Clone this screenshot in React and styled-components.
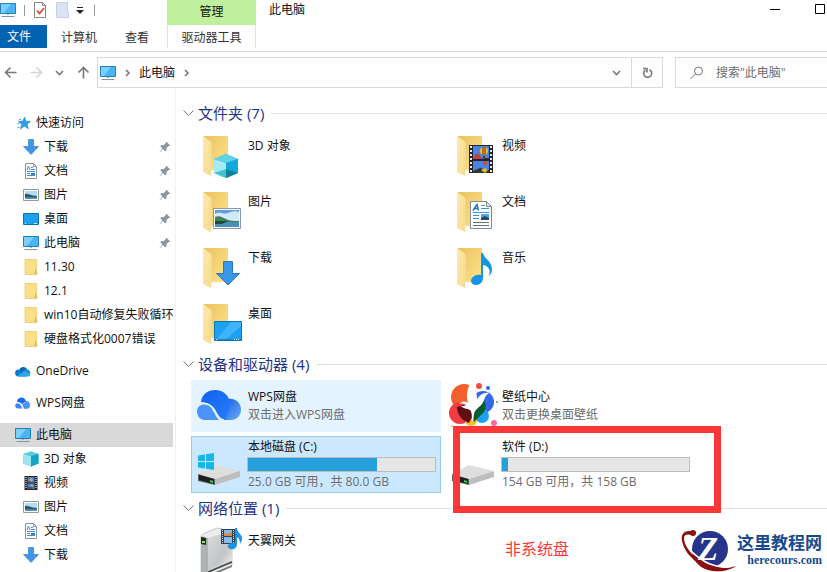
import React from 'react'
import styled, { createGlobalStyle, css } from 'styled-components'

const GlobalStyle = createGlobalStyle`
  * {
    box-sizing: border-box;
  }

  body {
    margin: 0;
    background: #fff;
    color: #111;
    font: 12px/18px 'Open Sans', 'Noto Sans CJK SC', sans-serif;
  }

  button,
  input {
    font: inherit;
    color: inherit;
    border: 0;
    padding: 0;
    background: none;
  }

  svg {
    display: block;
    flex: none;
    overflow: visible;
  }
`

const Window = styled.div`
  position: relative;
  display: flex;
  flex-direction: column;
  height: 100vh;
  overflow: hidden;
`

/* ---------- header ---------- */

const TitleBar = styled.header`
  display: flex;
  flex: none;
  height: 25px;
`

const QuickAccess = styled.div`
  display: flex;
  align-items: center;
  width: 167px;
  padding-bottom: 5px;
  gap: 8px;
`

const QuickButton = styled.button`
  display: flex;
`

const Separator = styled.span`
  width: 1px;
  height: 11px;
  background: #999;
`

const ContextTitle = styled.div`
  width: 89px;
  padding-top: 3px;
  background: #c1f09c;
  text-align: center;
`

const Title = styled.h1`
  flex: 1;
  margin: 0;
  padding-left: 13px;
  font-size: 12px;
  font-weight: 400;
  line-height: 20px;
`

const WindowButtons = styled.div`
  display: flex;
  gap: 34px;
  padding: 4px 1px 0 0;
`

const WindowButton = styled.button`
  display: flex;
  height: 11px;
`

const Tabs = styled.nav`
  display: flex;
  flex: none;
  height: 27px;
  border-bottom: 1px solid #d9d9d9;
`

const MainTabs = styled.div`
  display: flex;
  width: 167px;
`

const Tab = styled.button`
  height: 23px;
  padding: 2px 14px 0;
  color: #333;

  ${(props) => props.$file && css`
    width: 47px;
    padding: 0 16px 0 7px;
    background: #0063b1;
    color: #fff;
  `}

  ${(props) => props.$context && css`
    width: 89px;
    padding: 2px 0 0;
    border: solid #dfe6da;
    border-width: 0 1px;
  `}
`

const AddressBar = styled.div`
  display: flex;
  flex: none;
  align-items: center;
  height: 31px;
  margin-top: 5px;
`

const NavButtons = styled.div`
  display: flex;
  justify-content: space-between;
  width: 97px;
  padding: 0 7px 0 4px;
`

const NavButton = styled.button`
  display: flex;
  align-items: center;
`

const Address = styled.div`
  display: flex;
  flex: 1;
  align-items: center;
  height: 31px;
  padding-left: 2px;
  gap: 9px;
  border: 1px solid #d9d9d9;
`

const AddressEnd = styled.div`
  display: flex;
  margin-left: auto;
`

const AddressButton = styled.button`
  display: flex;
  align-items: center;
  justify-content: center;
  width: ${(props) => props.$width}px;
  height: 29px;
  border-left: ${(props) => (props.$divided ? '1px solid #d9d9d9' : '0')};
`

const Search = styled.label`
  display: flex;
  align-items: center;
  width: 152px;
  height: 31px;
  margin-left: 12px;
  padding-left: 14px;
  gap: 12px;
  border: 1px solid #d9d9d9;
  border-right: 0;
`

const SearchInput = styled.input`
  width: 100px;
  outline: 0;

  &::placeholder {
    color: #6d6d6d;
    opacity: 1;
  }
`

/* ---------- body ---------- */

const Body = styled.div`
  display: flex;
  flex: 1;
  min-height: 0;
`

const Sidebar = styled.nav`
  display: flex;
  flex: none;
  flex-direction: column;
  gap: 8px;
  width: 176px;
  padding: 23px 2px 0 0;
  border-right: 1px solid #f0f0f0;
  overflow: hidden;
`

const SideLink = styled.a`
  display: flex;
  align-items: center;
  gap: 5px;
  height: 24px;
  padding-left: ${(props) => (props.$nested ? 23 : 15)}px;
  background: ${(props) => (props.$selected ? '#d9d9d9' : 'none')};
  color: inherit;
  text-decoration: none;
  white-space: nowrap;
`

const PinSlot = styled.span`
  margin-left: auto;
  padding-right: 2px;
`

const Content = styled.main`
  flex: 1;
  min-width: 0;
  padding: 12px 0 0 7px;
  overflow: hidden;
`

const GroupTitle = styled.h2`
  display: flex;
  align-items: center;
  height: 26px;
  margin: 0;
  gap: 4px;
  color: #1e3287;
  font-size: 15px;
  font-weight: 400;

  &::after {
    content: '';
    flex: 1;
    height: 1px;
    margin-left: 3px;
    background: #e2e2e2;
  }
`

const Tiles = styled.div`
  display: grid;
  grid-template-columns: 250px 250px;
  gap: 4px;
  padding: 3px 0 2px 8px;
`

const Tile = styled.div`
  position: relative;
  display: grid;
  grid-template-columns: 51px 188px;
  height: ${(props) => (props.$drive ? 57 : 52)}px;
  padding: 2px 0 0 6px;
  background: ${(props) => (props.$hover ? '#e5f3ff' : 'none')};

  ${(props) => props.$selected && css`
    background: #cce8ff;
    box-shadow: inset 0 0 0 1px #9acbef;
  `}
`

const TileText = styled.div`
  padding-top: ${(props) => (props.$drive ? 0 : 6)}px;
`

const Name = styled.div``

const Detail = styled.div`
  color: #6d6d6d;
`

const Bar = styled.div`
  height: 15px;
  margin: 1px 0 1px -1px;
  border: 1px solid #bcbcbc;
  background: #e6e6e6;
`

const Fill = styled.div`
  height: 100%;
  background: #26a0da;
`

const Highlight = styled.div`
  position: absolute;
  top: -10px;
  left: 8px;
  width: 268px;
  height: 87px;
  border: 7px solid #fb3838;
`

const Note = styled.div`
  position: absolute;
  top: 104px;
  left: 60px;
  color: #fb3838;
  font-size: 16px;
`

const Brand = styled.div`
  position: absolute;
  right: 5px;
  bottom: 0;
  display: flex;
  align-items: center;
  height: 42px;
  color: #17498d;
  font-weight: 700;
`

const BrandName = styled.div`
  font-size: 17px;
  line-height: 18px;
`

const BrandSite = styled.div`
  font: 700 12px/16px 'Liberation Serif', serif;
  text-align: right;
`

/* ---------- small icons ---------- */

const Icon = ({ size = 16, children }) => (
  <svg width={size} height={size} viewBox="0 0 16 16" aria-hidden="true">{children}</svg>
)

const PcIcon = () => (
  <Icon>
    <path d="M.5 1.500h15v10H.5z" fill="#4ab5f5" stroke="#287fb8" />
    <path d="M1 2h10L4 11H1z" fill="#7bd0ff" />
    <path d="M7 12h2v1H7z" fill="#9fb6c6" />
    <path d="M1.500 14.500h13" stroke="#8096a6" />
  </Icon>
)

const StarIcon = () => (
  <Icon>
    <path d="M9.500 2l1.600 4.200 4.600.2-3.500 2.800 1.100 4.500-3.900-2.400L5.300 14l1.400-4.600L3.200 6.300l4.600-.2z" fill="#2f9fe6" stroke="#1c81c4" strokeWidth=".5" />
    <path d="M4 4.500h2M2.500 8.500h2M2.500 12.500h2" stroke="#49b0f0" />
  </Icon>
)

const DownIcon = () => (
  <Icon>
    <path d="M5.500.5h5v7h5L8 15.500.5 7.500h5z" fill="#3d97e6" stroke="#2a78c0" strokeWidth=".6" />
  </Icon>
)

const DocIcon = () => (
  <Icon>
    <path d="M2.500.5h8l3 3v12h-11z" fill="#fff" stroke="#8b969f" />
    <path d="M10.500.5v3h3" fill="none" stroke="#8b969f" />
    <path d="M4 7l1.500-4L7 7M8 4.500h2M8 6.500h4M4 8.500h8M4 10.500h3M4 12.500h8" fill="none" stroke="#3c91d6" />
    <path d="M8 10h4v2H8z" fill="#3c7cae" />
  </Icon>
)

const PictureIcon = () => (
  <Icon>
    <path d="M.5 2.500h15v11H.5z" fill="#fff" stroke="#8c9aa6" />
    <path d="M2 4h12v8H2z" fill="#b9dcf5" />
    <path d="M2 7c3-1 6 2 12 2v3H2z" fill="#2f5d76" />
    <path d="M2 10.500h12V12H2z" fill="#6497bd" />
  </Icon>
)

const DesktopIcon = () => (
  <Icon>
    <path d="M.5 2.500h15v11H.5z" fill="#1a9ff1" stroke="#0f6eb4" />
    <path d="M2 12.500h1M11 12.500h3" stroke="#d7f0ff" />
  </Icon>
)

const FolderIcon = () => (
  <Icon>
    <path d="M2 .5h11.500v11H14v4H2z" fill="#fbdf86" stroke="#e5bd52" strokeWidth=".6" />
    <path d="M12 11.500l1-1.500v5.500h-1z" fill="#d9a93c" />
  </Icon>
)

const OneDriveIcon = () => (
  <Icon>
    <path d="M4 7a4.500 4.500 0 0 1 8-1l-5 6z" fill="#0f63b5" />
    <path d="M3.500 13.500A3.400 3.400 0 0 1 3.600 6.600l8.400 6.900z" fill="#1377d1" />
    <path d="M8 8l3.500-2A3.800 3.800 0 0 1 15 8.500c.7 1 .5 2-.5 2.800z" fill="#1b90e0" />
    <path d="M2.500 13L8.500 8.300l6.800 2.700a2 2 0 0 1-2 2.500H4z" fill="#28a8ea" />
  </Icon>
)

const WpsIcon = () => (
  <Icon>
    <path d="M2 7A4.500 4.500 0 0 1 10.500 5l2.500 8.500H9C8 9 6 7 2 7z" fill="#1f68f2" />
    <path d="M11 6a4 4 0 0 1 2 7.500h-3L8 9z" fill="#4b96ff" />
    <path d="M.2 10.500C1 7.500 4 7.500 5.500 9.500l2 4H3a3 3 0 0 1-2.800-3z" fill="#3b85fa" />
    <path d="M2 8c3 0 4.500 2 5.500 5.500M7 10l3-3" fill="none" stroke="#fff" strokeWidth=".6" />
  </Icon>
)

const CubeIcon = () => (
  <Icon>
    <path d="M8 .5L15.500 3v9.500L8 15.500.5 12.500V3z" fill="#25b5d2" />
    <path d="M.5 3L8 5v10.500L.5 12.500z" fill="#9ee6ee" />
    <path d="M8 .5L15.500 3 8 5 .5 3z" fill="#5acee0" />
    <path d="M8 5l7.500-2v9.500L8 15.500z" fill="#18a2c4" />
  </Icon>
)

const FilmIcon = () => (
  <Icon>
    <path d="M1.500 1h13v14h-13z" fill="#23262c" />
    <path d="M4.500 2h7v5.500h-7zM4.500 8.500h7V14h-7z" fill="#4a7fd8" />
    <path d="M6 5l2-2 2 2-2 2zM7 11l2-2 2 3z" fill="#e5a62d" />
    <path d="M4.500 6h3v1.500h-3zM4.500 12h5v2h-5z" fill="#435268" />
    <path d="M3 2v12M13 2v12" stroke="#fff" strokeDasharray="1 1" />
  </Icon>
)

const PinIcon = () => (
  <Icon size={12}>
    <path d="M10 1l5 5-1.500 1-1-.2-2.600 2.800.2 3-1.500 1.400-3.300-3.300L1 15l-.5-.5 4-4.500L1.600 6.700 3 5.300l3.200.3L9 3l-.2-1z" fill="#8b979f" />
  </Icon>
)

/* ---------- tile icons, 48px box ---------- */

const BigIcon = ({ children }) => (
  <svg width="48" height="48" viewBox="0 0 48 48" aria-hidden="true">{children}</svg>
)

const Folder = ({ children }) => (
  <BigIcon>
    <defs>
      <linearGradient id="folderBack" x2="1" y2="1">
        <stop offset="0" stopColor="#e9c45c" />
        <stop offset="1" stopColor="#fde391" />
      </linearGradient>
      <linearGradient id="folderFlap" x2="1" y2="1">
        <stop offset="0" stopColor="#fdeaa9" />
        <stop offset="1" stopColor="#f6da90" />
      </linearGradient>
    </defs>
    <g transform="translate(6 5)">
      <path d="M1 0h24v34H1z" fill="url(#folderBack)" />
      <path d="M7 34h4v5H7z" fill="#fff" stroke="#e6ebee" strokeWidth=".5" />
      <path d="M0 0l7 5c1 .6 1.500 1 1.500 3v26L8 40l-8-4z" fill="url(#folderFlap)" />
      {children}
    </g>
  </BigIcon>
)

const CubeFolder = () => (
  <Folder>
    <path d="M23 18l12 5v14l-12 5-12-5V23z" fill="#1fb0d2" />
    <path d="M11 23l12 4v15l-12-5z" fill="#a7ebf2" />
    <path d="M11 37l12-4v9z" fill="#42c4cf" />
    <path d="M23 18l12 5-12 4-12-4z" fill="#62d3e5" />
    <path d="M23 27l12-4v14l-12-4z" fill="#12a8dc" />
    <path d="M23 33l12 4-12 5z" fill="#0d8199" />
  </Folder>
)

const PictureFolder = () => (
  <Folder>
    <path d="M10.500 16.500h27v20h-27z" fill="#fff" stroke="#8b99a6" />
    <path d="M12 18h24v17H12z" fill="#5f9fe0" />
    <path d="M12 22c6-3 8 1 13-1s7-2 11-1v9H12z" fill="#d4eafa" />
    <path d="M12 25c4-2 7 0 11 2s8 2 13 2v1H12z" fill="#3f7f5c" />
    <path d="M12 30h24v5H12z" fill="#4a8fb8" />
    <path d="M12 29h13l-6 3h-7z" fill="#20493f" />
  </Folder>
)

const DownFolder = () => (
  <Folder>
    <path d="M20.500 13.500h9v12h7L25 37 13.500 25.500h7z" fill="#3b97ea" stroke="#2a78bd" />
  </Folder>
)

const DesktopFolder = () => (
  <Folder>
    <path d="M11.500 17.500h27v19h-27z" fill="#1da1f5" stroke="#1174b2" />
    <path d="M28 18h10v4L22 36h-9z" fill="#40b4fb" />
    <path d="M12 35.500h26" stroke="#1687ce" />
    <path d="M13 35.500h1M31 35.500h6" stroke="#fff" strokeDasharray="1 1" />
  </Folder>
)

const VideoFolder = () => (
  <Folder>
    <path d="M12 9h24v28H12z" fill="#24252b" />
    <path d="M16 10h16v13H16zM16 25h16v12H16z" fill="#4b83e4" />
    <path d="M14 10v27M34 10v27" stroke="#e9edf2" strokeWidth="2" strokeDasharray="2 2" />
    <circle cx="27" cy="15" r="4" fill="#f0bd28" />
    <path d="M26 11v8M28 11v8" stroke="#6b2819" fill="none" />
    <path d="M26 20h2v2h-2z" fill="#6b2819" />
    <path d="M16 23l2-4 3-2 3 4 1 2z" fill="#c1403f" />
    <path d="M25 23l3-1 4 0v1zM16 35l7-3 9 2v3H16z" fill="#293a35" />
    <circle cx="28" cy="27" r="2" fill="#db4431" />
    <path d="M24 34l4-2 3 2-3 3z" fill="#f0b52b" />
  </Folder>
)

const DocFolder = () => (
  <Folder>
    <path d="M13.500 9.500h16l5 5v22h-21z" fill="#fff" stroke="#7f8b95" />
    <path d="M29.500 9.500v5h5z" fill="#dfe5e9" stroke="#7f8b95" />
    <path d="M16 18.500l4-6 1.500 6M17.500 16.500h4" fill="none" stroke="#1d6fc0" strokeWidth="1.400" />
    <path d="M24 13.500h4M24 16.500h8M16 20.500h16M16 23.500h6M16 26.500h6" stroke="#3a94db" />
    <path d="M16 30.500h16M16 33.500h16" stroke="#65717b" />
    <path d="M24 22h8v6h-8z" fill="#5ba5df" />
    <path d="M24 26l4-2 4 2v2h-8z" fill="#214b5e" />
  </Folder>
)

const MusicFolder = () => (
  <Folder>
    <path d="M24 5h2c1 6 9 8 9 16 0 3-1 5-3 7 2-7-1-10-6-11v13c0 4-3 7-7 7-3 0-5-2-5-4 0-4 5-7 10-6z" fill="#1495e8" />
  </Folder>
)

const WpsDrive = () => (
  <BigIcon>
    <defs>
      <linearGradient id="wpsTop" x2="1" y2="1">
        <stop offset="0" stopColor="#0d62ef" />
        <stop offset="1" stopColor="#2a7bfb" />
      </linearGradient>
      <linearGradient id="wpsSide" x2="1" y2="1">
        <stop offset="0" stopColor="#1557dc" />
        <stop offset="1" stopColor="#66b0ff" />
      </linearGradient>
    </defs>
    <path d="M31 17c7-1 13 4 13 10.500S39 38 34 38h-9z" fill="url(#wpsSide)" />
    <path d="M4 20C5 12 11 8 18 8c9 0 14 6 15 13 0 7-3 12-5 17-4 0-6-2-8-6-3-7-8-12-16-12z" fill="url(#wpsTop)" />
    <path d="M0 29c0-4 4-7 8-7 7 0 9 11 14 16H8c-5 0-8-4-8-9z" fill="#4a94fb" />
    <path d="M3 21.500c11-1 14 5 16.500 10 2 4 4 6 7.500 6.500" fill="none" stroke="#e5f3ff" strokeWidth="1.500" />
  </BigIcon>
)

const driveShapes = (
  <>
    <path d="M1 36l17-9 25 6-25 8z" fill="#dededf" />
    <path d="M18 41l25-8v6l-25 8z" fill="#bcbebf" />
    <path d="M1 36l17 5v6L1 43z" fill="#5d6160" />
    <path d="M2 37l15 4v5L2 42z" fill="#1c201e" />
    <path d="M13 42l3 1v2l-3-1z" fill="#42d552" />
  </>
)

const SystemDrive = () => (
  <BigIcon>
    {driveShapes}
    <path d="M1 17.500l7-1V23H1zM9 16.300l8-1.300v8H9zM1 24h7v6.500l-7-1zM9 24h8v8l-8-1.300z" fill="#16b5ea" />
  </BigIcon>
)

const DataDrive = () => <BigIcon>{driveShapes}</BigIcon>

const WallpaperIcon = () => (
  <BigIcon>
    <circle cx="13" cy="15" r="13" fill="#f4602d" />
    <circle cx="9" cy="31" r="11" fill="#f23c44" />
    <circle cx="32" cy="20" r="11" fill="#3169ed" />
    <circle cx="31" cy="34" r="7" fill="#1d9ff2" />
    <circle cx="20" cy="38" r="6" fill="#fcbc24" />
    <path d="M6 25l11-3 5 11-4 8C10 38 6 32 6 25z" fill="#601012" />
    <path d="M24 23l9-5c3 5 2 11-2 14l-8 8-3-7z" fill="#075b2c" />
    <path d="M19 2c6 4 7 9 7 15 4-5 7-7 12-6-5 3-4 7-7 11-3 4-7 5-8 10l-1 8c-2-3 0-9-3-12-3-2-7-1-9-4 2 0 4 0 5-1-2-1-4-2-7-1 3-3 6-3 9-1-2-7-1-13 2-19z" fill="#fff" />
    <circle cx="28" cy="4" r="3" fill="#f24b43" />
    <circle cx="37" cy="6" r="2" fill="#2f67ec" />
    <circle cx="43" cy="41" r="3" fill="#fa64a8" />
    <circle cx="46" cy="20" r="1" fill="#4bb04f" />
    <circle cx="1" cy="44" r="1" fill="#fcc02b" />
  </BigIcon>
)

const GatewayIcon = () => (
  <BigIcon>
    <defs>
      <linearGradient id="gateway" x2="1" y2="1">
        <stop offset="0" stopColor="#d9dadb" />
        <stop offset=".6" stopColor="#c3c5c6" />
        <stop offset="1" stopColor="#f0f0f0" />
      </linearGradient>
    </defs>
    <path d="M4 11c0-2 1-2 2-3l14-6 15 3v35l-24 11-7-4z" fill="#ededed" stroke="#a2a4a5" strokeWidth=".6" />
    <path d="M4 10l7 2v37l-7-3z" fill="#aeb2b4" />
    <path d="M11 12l24-7v30l-24 9z" fill="url(#gateway)" />
    <path d="M11 45l24-10v2l-24 10z" fill="#4c5051" />
    <path d="M11 49l24-10v2l-24 10z" fill="#777b7c" />
    <path d="M4 11l5 1v7l-5-1z" fill="#222b20" />
    <path d="M5 15h3v2H5z" fill="#8be94d" />
    <path d="M24 3h14v15H24z" fill="#314255" />
    <path d="M27 4h8v6h-8zM27 11h8v6h-8z" fill="#87bce8" />
    <path d="M27 7l3 1 5-2v4h-8z" fill="#d48a41" />
    <path d="M25.500 4v14M36.500 4v14" stroke="#d5e1e9" strokeDasharray="1 1" />
    <path d="M38 2h2c0 5 6 6 5 12l-2 4c0-4-1-6-3-7v7c0 4-3 6-7 5-5-2-1-7 5-6z" fill="#1f92e3" />
  </BigIcon>
)

const BrandLogo = () => (
  <svg width="56" height="42" viewBox="0 0 56 42" aria-hidden="true">
    <circle cx="29" cy="19" r="18" fill="#26358b" />
    <path d="M10 1C-3 0-1 13 8 25c7 8 15 13 25 16-14-8-30-22-30-33 0-4 4-4 8-3z" fill="#8b1010" />
    <circle cx="12" cy="3" r="3" fill="#8b1010" />
    <path d="M11 23c2 9 9 17 21 18 9 1 18-1 23-5-6 2-12 3-18 1-11-2-20-8-26-14z" fill="#8b1010" />
    <path d="M4 12c7 11 20 22 39 25-7 0-15-1-23-7C12 25 6 19 4 12z" fill="#fff" />
    <text x="17" y="30" fill="#fff" fontFamily="Liberation Serif, serif" fontSize="33" fontStyle="italic" fontWeight="700">Z</text>
  </svg>
)

const Chevron = ({ right, color = '#777' }) => (
  <svg width={right ? 5 : 9} height={right ? 8 : 6} fill="none" stroke={color} strokeWidth="1.600" aria-hidden="true">
    <path d={right ? 'M1 1l3 3-3 3' : 'M1 1l3.500 3.500L8 1'} />
  </svg>
)

const Arrow = ({ color = '#777', rotate = 0 }) => (
  <svg width="13" height="13" viewBox="0 0 13 13" fill="none" stroke={color} strokeWidth="1.600" aria-hidden="true">
    <path d="M12.500 6.500H1.500M6.500 1.500l-5 5 5 5" transform={`rotate(${rotate} 6.500 6.500)`} />
  </svg>
)

/* ---------- data ---------- */

const sections = [
  [
    { name: '快速访问', icon: StarIcon },
    { name: '下载', icon: DownIcon, nested: true, pinned: true },
    { name: '文档', icon: DocIcon, nested: true, pinned: true },
    { name: '图片', icon: PictureIcon, nested: true, pinned: true },
    { name: '桌面', icon: DesktopIcon, nested: true, pinned: true },
    { name: '此电脑', icon: PcIcon, nested: true, pinned: true },
    { name: '11.30', icon: FolderIcon, nested: true },
    { name: '12.1', icon: FolderIcon, nested: true },
    { name: 'win10自动修复失败循环', icon: FolderIcon, nested: true },
    { name: '硬盘格式化0007错误', icon: FolderIcon, nested: true },
  ],
  [{ name: 'OneDrive', icon: OneDriveIcon }],
  [{ name: 'WPS网盘', icon: WpsIcon }],
  [
    { name: '此电脑', icon: PcIcon, selected: true },
    { name: '3D 对象', icon: CubeIcon, nested: true },
    { name: '视频', icon: FilmIcon, nested: true },
    { name: '图片', icon: PictureIcon, nested: true },
    { name: '文档', icon: DocIcon, nested: true },
    { name: '下载', icon: DownIcon, nested: true },
  ],
]

const groups = [
  {
    title: '文件夹 (7)',
    items: [
      { name: '3D 对象', icon: CubeFolder },
      { name: '视频', icon: VideoFolder },
      { name: '图片', icon: PictureFolder },
      { name: '文档', icon: DocFolder },
      { name: '下载', icon: DownFolder },
      { name: '音乐', icon: MusicFolder },
      { name: '桌面', icon: DesktopFolder },
    ],
  },
  {
    title: '设备和驱动器 (4)',
    items: [
      { name: 'WPS网盘', icon: WpsDrive, detail: '双击进入WPS网盘', hover: true },
      { name: '壁纸中心', icon: WallpaperIcon, detail: '双击更换桌面壁纸' },
      { name: '本地磁盘 (C:)', icon: SystemDrive, detail: '25.0 GB 可用，共 80.0 GB', used: 69, selected: true },
      { name: '软件 (D:)', icon: DataDrive, detail: '154 GB 可用，共 158 GB', used: 3, note: '非系统盘' },
    ],
  },
  {
    title: '网络位置 (1)',
    items: [{ name: '天翼网关', icon: GatewayIcon }],
  },
]

function SideItem({ item }) {
  const ItemIcon = item.icon

  return (
    <SideLink href="#" $nested={item.nested} $selected={item.selected}>
      <ItemIcon />
      {item.name}
      {item.pinned && <PinSlot><PinIcon /></PinSlot>}
    </SideLink>
  )
}

function ItemTile({ item }) {
  const ItemIcon = item.icon
  const drive = item.used !== undefined

  return (
    <Tile $drive={drive} $hover={item.hover} $selected={item.selected}>
      <ItemIcon />
      <TileText $drive={drive}>
        <Name>{item.name}</Name>
        {drive && (
          <Bar role="meter" aria-label={item.name} aria-valuenow={item.used}>
            <Fill style={{ width: `${item.used}%` }} />
          </Bar>
        )}
        {item.detail && <Detail>{item.detail}</Detail>}
      </TileText>
      {item.note && (
        <>
          <Highlight />
          <Note>{item.note}</Note>
        </>
      )}
    </Tile>
  )
}

function Header() {
  return (
    <>
      <TitleBar>
        <QuickAccess>
          <PcIcon />
          <Separator />
          <QuickButton aria-label="属性">
            <svg width="16" height="16" fill="none">
              <path d="M1.500.5h8l3 3v12h-11z" fill="#fff" stroke="#858585" />
              <path d="M9.500.5v3h3" stroke="#858585" />
              <path d="M4 8.500l2.500 3L11 6" stroke="#e2502b" strokeWidth="1.800" />
            </svg>
          </QuickButton>
          <QuickButton aria-label="新建文件夹">
            <svg width="13" height="16">
              <path d="M-.5.500h11V10h1v5.500H-.5z" fill="#dbe4f5" stroke="#c6d1e6" />
            </svg>
          </QuickButton>
          <QuickButton aria-label="自定义快速访问工具栏">
            <svg width="8" height="8">
              <path d="M-1 1.500h6" stroke="#222" />
              <path d="M-2 4h8L2 8z" fill="#222" />
            </svg>
          </QuickButton>
          <Separator />
        </QuickAccess>
        <ContextTitle>管理</ContextTitle>
        <Title>此电脑</Title>
        <WindowButtons>
          <WindowButton aria-label="最小化">
            <svg width="11" height="11"><path d="M0 5.500h10" stroke="#000" /></svg>
          </WindowButton>
          <WindowButton aria-label="最大化">
            <svg width="11" height="11"><path d="M.5.500h9v9h-9z" fill="none" stroke="#000" /></svg>
          </WindowButton>
        </WindowButtons>
      </TitleBar>
      <Tabs>
        <MainTabs>
          <Tab $file>文件</Tab>
          <Tab>计算机</Tab>
          <Tab>查看</Tab>
        </MainTabs>
        <Tab $context>驱动器工具</Tab>
      </Tabs>
      <AddressBar>
        <NavButtons>
          <NavButton aria-label="后退"><Arrow /></NavButton>
          <NavButton aria-label="前进"><Arrow color="#d5d5d5" rotate={180} /></NavButton>
          <NavButton aria-label="最近位置"><Chevron /></NavButton>
          <NavButton aria-label="向上"><Arrow rotate={90} /></NavButton>
        </NavButtons>
        <Address>
          <PcIcon />
          <Chevron right />
          <NavButton>此电脑</NavButton>
          <Chevron right />
          <AddressEnd>
            <AddressButton $width={29} aria-label="历史记录"><Chevron /></AddressButton>
            <AddressButton $width={31} $divided aria-label="刷新">
              <svg width="11" height="12" fill="none" stroke="#777" strokeWidth="1.600">
                <path d="M7.500 2.800a4 4 0 1 1-4 .2" />
                <path d="M1 1.500h4v4" />
              </svg>
            </AddressButton>
          </AddressEnd>
        </Address>
        <Search>
          <svg width="14" height="14" fill="none" stroke="#777">
            <circle cx="8.500" cy="5" r="4" />
            <path d="M5.500 8L.5 13" />
          </svg>
          <SearchInput placeholder={'搜索"此电脑"'} aria-label="搜索" />
        </Search>
      </AddressBar>
    </>
  )
}

function App() {
  return (
    <Window>
      <GlobalStyle />
      <Header />
      <Body>
        <Sidebar>
          {sections.map((items, i) => (
            <div key={i}>
              {items.map((item) => <SideItem key={item.name} item={item} />)}
            </div>
          ))}
        </Sidebar>
        <Content>
          {groups.map((group) => (
            <section key={group.title}>
              <GroupTitle>
                <svg width="11" height="7" fill="none" stroke="#777"><path d="M.5.500l5 5 5-5" /></svg>
                {group.title}
              </GroupTitle>
              <Tiles>
                {group.items.map((item) => <ItemTile key={item.name} item={item} />)}
              </Tiles>
            </section>
          ))}
        </Content>
      </Body>
      <Brand>
        <BrandLogo />
        <div>
          <BrandName>这里教程网</BrandName>
          <BrandSite>herecours.com</BrandSite>
        </div>
      </Brand>
    </Window>
  )
}

export default App
